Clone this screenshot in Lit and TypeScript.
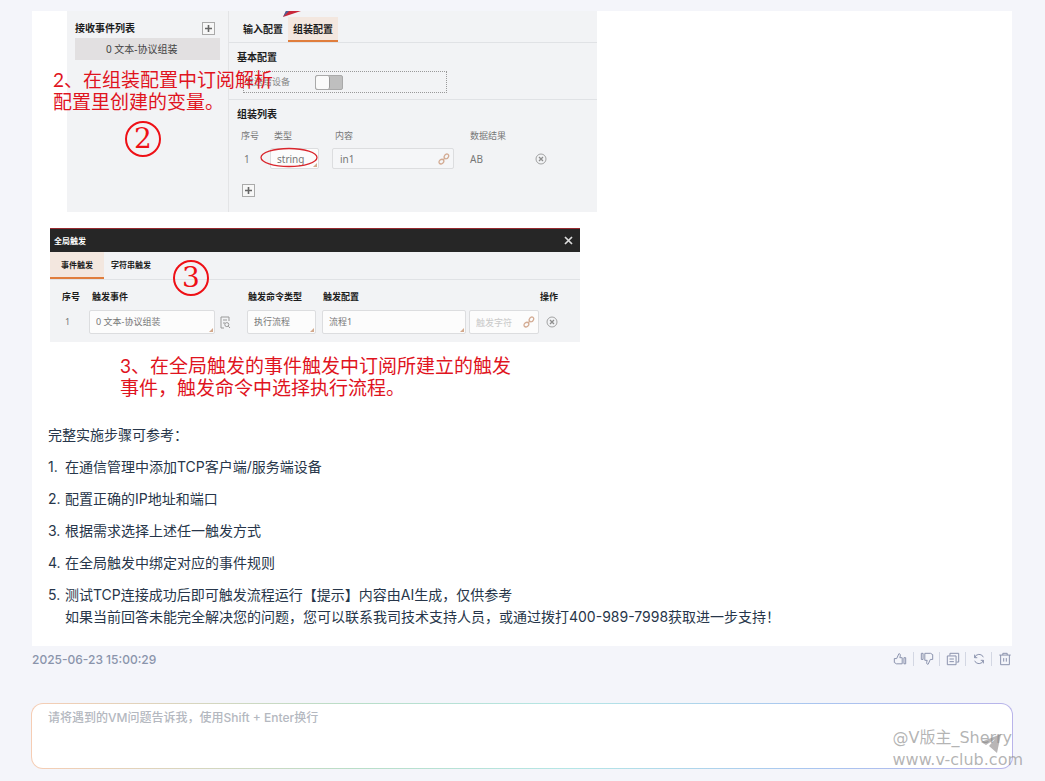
import { LitElement, html, css, svg } from "lit";
import { customElement, property } from "lit/decorators.js";

const linkIcon = svg`<svg class="link" viewBox="0 0 12 12" width="12" height="12" fill="none" stroke="#d3ab93" stroke-width="1.3"><ellipse cx="8.4" cy="3.4" rx="2" ry="2.6" transform="rotate(35 8.4 3.4)"/><ellipse cx="3.4" cy="8.6" rx="2" ry="2.6" transform="rotate(50 3.4 8.6)"/><path d="M4.8 7.2 7.2 4.8"/></svg>`;

const closeIcon = svg`<svg viewBox="0 0 12 12" width="12" height="12" fill="none" stroke="#8d8d8d"><circle cx="6" cy="6" r="5" stroke-width=".8"/><path d="m4 4 4 4M8 4 4 8" stroke-width="1.3"/></svg>`;

const plusIcon = svg`<svg viewBox="0 0 13 13" width="13" height="13" fill="none" stroke="#666"><rect x=".5" y=".5" width="12" height="12" fill="#f7f7f7" stroke="#aaa"/><path d="M3 6.5h7M6.5 3v7" stroke-width="1.6"/></svg>`;

const shared = css`
  * { box-sizing: border-box; }
  :host { display: block; box-sizing: border-box; }
  button {
    display: inline-flex; align-items: center; justify-content: center;
    padding: 0; border: 0; background: none; font: inherit; color: inherit; cursor: pointer;
  }
  svg { display: block; }
`;

const panel = css`
  :host {
    position: relative; color: #1c1c1c;
    font-family: "Noto Sans", "Noto Sans CJK SC", sans-serif; font-size: 10px; line-height: 14px;
  }
  table { border-collapse: collapse; table-layout: fixed; width: 100%; }
  th, td { padding: 0; text-align: left; white-space: nowrap; }
  td button { display: flex; }
  select, input[type="text"] {
    display: block; width: 100%; margin: 0; padding: 0 6px; appearance: none;
    border: 1px solid #dcdddf; border-radius: 2px; background: #fcfcfc;
    font: inherit; color: #777; outline: none;
  }
  .pick { display: block; position: relative; }
  .pick::after {
    content: ""; position: absolute; right: 2px; bottom: 2px;
    border: 2px solid; border-color: transparent #d3a98c #d3a98c transparent;
  }
  .linked { display: block; position: relative; }
  .link { position: absolute; right: 4px; top: 50%; transform: translateY(-50%); }
  .ring {
    position: absolute; width: 36px; height: 36px; border: 2px solid #ee1016; border-radius: 50%;
    color: #ee1016; text-align: center; font: 28px/32px "DejaVu Serif", serif;
  }
  .note { color: #e0141e; font: 400 19px/22px Lato, "Noto Sans CJK SC", sans-serif; white-space: nowrap; }
`;

@customElement("assemble-panel")
class AssemblePanel extends LitElement {
  static styles = [shared, panel, css`
    :host { padding-left: 17px; }
    .body { display: grid; grid-template-columns: 162px 1fr; height: 201px; background: #f2f3f5; }
    .side { padding: 10px 8px 0; border-right: 1px solid #e3e4e6; }
    .side header { display: flex; justify-content: space-between; align-items: center; height: 14px; padding-right: 5px; font-weight: 700; }
    .entry { margin-top: 3px; height: 22px; line-height: 22px; padding-left: 31px; background: #e2e0e1; color: #444; }
    .main { padding-top: 6px; }
    .tabs { display: flex; padding-left: 9px; height: 26px; border-bottom: 1px solid #e0e2e5; }
    .tabs button { padding: 0 5px; font-weight: 700; border-bottom: 2px solid transparent; height: 25px; }
    .tabs .on { background: #f3e7df; border-color: #e07d3c; }
    h4 { margin: 7px 0 0 8px; font-size: 10px; line-height: 14px; }
    .send {
      display: flex; align-items: center; gap: 25px; width: 204px; height: 22px; margin: 7px 0 6px 14px;
      border: 1px dotted #999; font-size: 9px; color: #888; padding-left: 1px;
    }
    .switch { appearance: none; margin: 0; width: 28px; height: 15px; border: 1px solid #a9a9a9; border-radius: 2px; background: #bfbfbf; display: flex; }
    .switch::before { content: ""; width: 13px; background: #fafafa; border-right: 1px solid #999; border-radius: 2px; }
    .list { border-top: 1px solid #e0e2e5; }
    table { margin-top: 5px; color: #777; }
    th { height: 20px; font-weight: 400; font-size: 9px; }
    td { height: 25px; }
    select, input[type="text"] { height: 21px; }
    input[type="text"] { background: #f5f6f8; }
    .num { padding-left: 12px; }
    td.num { padding-left: 15px; }
    .kind { padding-left: 4px; }
    .typ { display: block; margin-right: 13px; }
    .val { display: block; margin-right: 16px; }
    .val input { padding-left: 7px; }
    th.v { padding-left: 3px; }
    .add { margin: 13px 0 0 13px; }
    .note { position: absolute; left: 3px; top: 58px; margin: 0; }
    .ring { left: 75px; top: 110px; }
    .oval { position: absolute; left: 210px; top: 136px; }
    .flag { position: absolute; left: 233px; top: 0; }
  `];

  render() {
    return html`
      <div class="body">
        <div class="side">
          <header><span>接收事件列表</span><button aria-label="添加事件">${plusIcon}</button></header>
          <div class="entry">0 文本-协议组装</div>
        </div>
        <div class="main">
          <div class="tabs"><button>输入配置</button><button class="on">组装配置</button></div>
          <h4>基本配置</h4>
          <label class="send"><span>发送给设备</span><input class="switch" type="checkbox" /></label>
          <div class="list">
            <h4>组装列表</h4>
            <table>
              <colgroup><col style="width:41px" /><col style="width:62px" /><col style="width:138px" /><col style="width:65px" /><col /></colgroup>
              <tr><th class="num">序号</th><th class="kind">类型</th><th class="v">内容</th><th>数据结果</th><th></th></tr>
              <tr>
                <td class="num">1</td>
                <td><span class="typ"><span class="pick"><select aria-label="类型"><option>string</option></select></span></span></td>
                <td><span class="val"><span class="linked"><input type="text" aria-label="内容" .value=${"in1"} />${linkIcon}</span></span></td>
                <td>AB</td>
                <td><button aria-label="删除">${closeIcon}</button></td>
              </tr>
            </table>
            <button class="add" aria-label="添加一行">${plusIcon}</button>
          </div>
        </div>
      </div>
      <svg class="flag" width="18" height="6" viewBox="0 0 18 6"><path d="M3 0h15L0 6z" fill="#c9283a"/><path d="M3 0h3L0 6z" fill="#46649b"/></svg>
      <svg class="oval" width="58" height="21" viewBox="0 0 58 21" fill="none" stroke="#d9252c" stroke-width="1.3"><ellipse cx="29" cy="10.5" rx="28" ry="9"/></svg>
      <p class="note">2、在组装配置中订阅解析<br />配置里创建的变量。</p>
      <span class="ring">2</span>
    `;
  }
}

@customElement("trigger-panel")
class TriggerPanel extends LitElement {
  static styles = [shared, panel, css`
    .body { background: #f2f3f5; border-top: 1px solid #962a2f; padding-bottom: 8px; }
    .title {
      display: flex; justify-content: space-between; align-items: center; height: 23px; padding: 0 7px 0 4px;
      background: #262626; color: #fff; font-size: 8px; font-weight: 700;
    }
    .tabs { display: flex; height: 28px; border-bottom: 1px solid #e0e2e5; font-size: 8px; font-weight: 700; }
    .tabs button { width: 54px; border-bottom: 2px solid transparent; }
    .tabs .on { background: #f3e7df; border-color: #e07d3c; }
    table { margin-top: 4px; font-size: 9px; }
    th { height: 26px; font-size: 9px; }
    td { height: 24px; color: #777; }
    select, input[type="text"] { height: 24px; }
    .n { padding-left: 12px; }
    td.n { padding-left: 15px; }
    .i { padding-left: 3px; }
    .s { padding-left: 1px; }
    .look { padding-left: 5px; }
    .drop { padding-left: 7px; }
    .gap { display: block; margin-right: 6px; }
    .gap3 { display: block; margin-right: 3px; }
    ::placeholder { color: #c9c9c9; opacity: 1; }
    .ring { left: 123px; top: 32px; }
    .note { margin: 13px 0 0 70px; }
  `];

  render() {
    return html`
      <div class="body">
        <div class="title"><span>全局触发</span><button aria-label="关闭"><svg width="9" height="9" viewBox="0 0 9 9" stroke="#ddd" stroke-width="1.7"><path d="m1 1 7 7M8 1 1 8"/></svg></button></div>
        <div class="tabs"><button class="on">事件触发</button><button>字符串触发</button></div>
        <table>
          <colgroup><col style="width:39px" /><col style="width:126px" /><col style="width:32px" /><col style="width:75px" /><col style="width:147px" /><col style="width:70px" /><col /></colgroup>
          <tr><th class="n">序号</th><th class="i" colspan="2">触发事件</th><th class="s">触发命令类型</th><th class="s">触发配置</th><th></th><th class="s">操作</th></tr>
          <tr>
            <td class="n">1</td>
            <td><span class="pick"><select aria-label="触发事件"><option>0 文本-协议组装</option></select></span></td>
            <td><button class="look" aria-label="查看"><svg width="11" height="13" viewBox="0 0 11 13" fill="none" stroke="#999"><path d="M4 12H1V1h8v4M3 4h4M3 7h2"/><circle cx="6.8" cy="8.6" r="2"/><path d="M8.3 10.2 10 12"/></svg></button></td>
            <td><span class="gap"><span class="pick"><select aria-label="触发命令类型"><option>执行流程</option></select></span></span></td>
            <td><span class="gap3"><span class="pick"><select aria-label="触发配置"><option>流程1</option></select></span></span></td>
            <td><span class="linked"><input type="text" aria-label="触发字符" placeholder="触发字符" />${linkIcon}</span></td>
            <td><button class="drop" aria-label="删除">${closeIcon}</button></td>
          </tr>
        </table>
      </div>
      <span class="ring">3</span>
      <p class="note">3、在全局触发的事件触发中订阅所建立的触发<br />事件，触发命令中选择执行流程。</p>
    `;
  }
}

const actions = [
  { label: "赞", icon: svg`<path d="M1.5 7.5h2.7L6.7 2c1.7 0 2 1.200 1.600 2.400L7.800 6.500h2.700v7H4L1.500 12z"/><path d="M12.500 6.500h2v7h-2z"/>` },
  { label: "踩", icon: svg`<path d="M5.500 1.500H12l2.500 1.500v5.500h-2.700L9.300 14c-1.700 0-2-1.200-1.600-2.400l.5-2.100H5.500z"/><path d="M1.500 1.500h2v7h-2z"/>` },
  { label: "复制", icon: svg`<path d="M4.500 4V1.500h10v10H12"/><path d="M1.500 4.500h10v10h-10zM4 8h5M4 11h5"/>` },
  { label: "重新生成", icon: svg`<path d="M3 6.500A5.300 5.300 0 0 1 13 6M13 9.500A5.300 5.300 0 0 1 3 10M3 3v3.500h3M13 13V9.500h-3"/>` },
  { label: "删除", icon: svg`<path d="M1.500 3.500h13M5.500 3.500v-2h5v2M3 3.500v11h10v-11M6.500 7v4M9.500 7v4"/>` },
];

@customElement("app-root")
class AppRoot extends LitElement {
  @property({ attribute: false }) steps = [
    ["在通信管理中添加TCP客户端/服务端设备"],
    ["配置正确的IP地址和端口"],
    ["根据需求选择上述任一触发方式"],
    ["在全局触发中绑定对应的事件规则"],
    ["测试TCP连接成功后即可触发流程运行【提示】内容由AI生成，仅供参考", "如果当前回答未能完全解决您的问题，您可以联系我司技术支持人员，或通过拨打400-989-7998获取进一步支持！"],
  ];

  static styles = [shared, css`
    :host {
      position: relative; min-height: 100vh; padding: 11px 33px 12px 32px; background: #f4f5fa;
      font-family: Inter, "Noto Sans CJK SC", sans-serif; color: #27364a;
    }
    .card { background: #fff; padding: 0 16px 18px; font-size: 14px; line-height: 22px; }
    assemble-panel, trigger-panel { width: 530px; max-width: 100%; margin-left: 2px; }
    assemble-panel { width: 547px; margin-bottom: 16px; }
    p { margin: 25px 0 0; }
    ol { margin: 0; padding: 0; list-style: none; counter-reset: step; }
    li { display: flex; margin-top: 10px; counter-increment: step; }
    li::before { content: counter(step) "."; flex: 0 0 17px; }
    .line { display: block; }
    .meta { display: flex; justify-content: space-between; align-items: center; height: 26px; color: #8a94ab; font-size: 12px; font-weight: 500; }
    .acts { display: flex; align-items: center; }
    .acts button { width: 26px; height: 14px; border-left: 1px solid #d3d7e3; }
    .acts button:first-child { border: 0; }
    .acts button:last-child { width: 21px; justify-content: flex-end; }
    .ask {
      display: flex; height: 66px; margin: 31px -1px 0; border: 1px solid transparent; border-radius: 12px;
      background: linear-gradient(#fff, #fff) padding-box, linear-gradient(90deg, #f6cdb4, #b9dec8 33%, #b5e6e6 55%, #a9c5f0 80%, #b9b4ea) border-box;
    }
    textarea {
      flex: 1; border: 0; padding: 4px 16px; background: none; resize: none; outline: none;
      font: 12px/20px Inter, "Noto Sans CJK SC", sans-serif; color: inherit;
    }
    ::placeholder { color: #b4b8c0; opacity: 1; font-weight: 500; }
    .send { align-self: flex-end; margin: 0 11px 15px 0; }
    .mark {
      position: absolute; right: 22px; bottom: 10px; color: rgba(130, 130, 130, .6); pointer-events: none;
      font: 16px/22px "DejaVu Sans", "Noto Sans CJK SC", sans-serif;
    }
  `];

  render() {
    return html`
      <main class="card">
        <assemble-panel></assemble-panel>
        <trigger-panel></trigger-panel>
        <p>完整实施步骤可参考：</p>
        <ol>${this.steps.map((s) => html`<li><div>${s.map((t) => html`<span class="line">${t}</span>`)}</div></li>`)}</ol>
      </main>
      <div class="meta">
        <time>2025-06-23 15:00:29</time>
        <div class="acts">${actions.map((a) => html`<button aria-label=${a.label}><svg width="14" height="14" viewBox="0 0 16 16" fill="none" stroke="#8790ab" stroke-width="1.1">${a.icon}</svg></button>`)}</div>
      </div>
      <div class="ask">
        <textarea aria-label="问题" placeholder="请将遇到的VM问题告诉我，使用Shift + Enter换行"></textarea>
        <button class="send" aria-label="发送"><svg width="20" height="19" viewBox="0 0 20 19" fill="#b9b6b6"><path d="M20 0 0 8l5 3 9-6-6 7 8 7z"/></svg></button>
      </div>
      <div class="mark">@V版主_Sherry<br />www.v-club.com</div>
    `;
  }
}
